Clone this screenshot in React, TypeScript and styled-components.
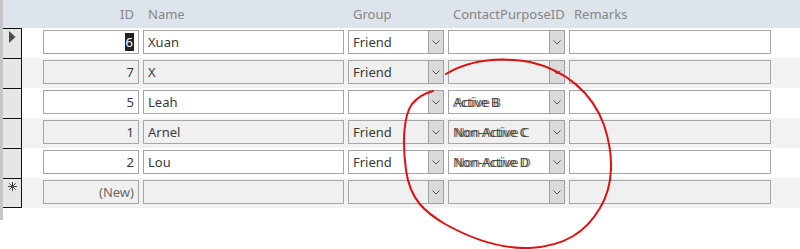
import React from "react";
import styled, { createGlobalStyle } from "styled-components";

const Global = createGlobalStyle`
  html, body { margin: 0; padding: 0; background: #ffffff; }
  body { font-family: "Noto Sans", "Liberation Sans", sans-serif; }
`;

const Page = styled.div`
  position: relative;
  width: 800px;
  height: 249px;
  display: flex;
  align-items: flex-start;
  background: #ffffff;
  overflow: hidden;
`;

const Strip = styled.div`
  width: 3px;
  height: 220px;
  background: #c6c6c6;
  flex: none;
`;

const Sheet = styled.div`
  flex: 1;
  display: flex;
  flex-direction: column;
`;

const HeaderRow = styled.div`
  display: flex;
  height: 28px;
  background: #dee4eb;
`;

const SelectorHead = styled.div`
  width: 19px;
  flex: none;
`;

const Columns = styled.div`
  flex: 1;
  display: grid;
  grid-template-columns: 96px 201px 96px 117px 202px;
  column-gap: 4px;
  padding-left: 21px;
`;

const HeadCell = styled.div<{ $right?: boolean }>`
  font-size: 13px;
  color: #858585;
  line-height: 28px;
  white-space: nowrap;
  overflow: hidden;
  text-align: ${(p) => (p.$right ? "right" : "left")};
  padding: 0 5px;
`;

const Row = styled.div<{ $alt: boolean }>`
  display: flex;
  height: 30px;
  background: ${(p) => (p.$alt ? "#f2f2f2" : "#ffffff")};
`;

const Selector = styled.div<{ $last?: boolean }>`
  width: 19px;
  height: 30px;
  flex: none;
  box-sizing: border-box;
  background: #e6e6e6;
  border-right: 1px solid #111;
  border-top: 1px solid #111;
  border-bottom: ${(p) => (p.$last ? "1px solid #111" : "none")};
  display: flex;
  justify-content: center;
  align-items: flex-start;
  padding-top: ${(p) => (p.$last ? "3px" : "2px")};
  padding-left: 1px;
`;

const RowColumns = styled(Columns)`
  padding-top: 2px;
  align-items: start;
`;

const Box = styled.div<{ $alt: boolean; $right?: boolean }>`
  box-sizing: border-box;
  height: 24px;
  border: 1px solid #a6a6a6;
  background: ${(p) => (p.$alt ? "#f0f0f0" : "#ffffff")};
  font-size: 13px;
  line-height: 22px;
  color: #3a3a3a;
  padding: 0 4px;
  text-align: ${(p) => (p.$right ? "right" : "left")};
  white-space: nowrap;
  overflow: hidden;
`;

const Combo = styled.div<{ $alt: boolean }>`
  box-sizing: border-box;
  height: 24px;
  border: 1px solid #a6a6a6;
  background: ${(p) => (p.$alt ? "#f0f0f0" : "#ffffff")};
  display: flex;
`;

const ComboText = styled.div<{ $ghost?: boolean }>`
  flex: 1;
  font-size: 13px;
  line-height: 22px;
  color: ${(p) => (p.$ghost ? "#4a4a4a" : "#3a3a3a")};
  padding: 0 4px;
  white-space: nowrap;
  overflow: hidden;
  letter-spacing: ${(p) => (p.$ghost ? "-0.3px" : "0")};
  text-shadow: ${(p) => (p.$ghost ? "2px 0 0 rgba(70,70,70,0.75)" : "none")};
`;

const DropBtn = styled.div`
  width: 16px;
  flex: none;
  box-sizing: border-box;
  margin: -1px -1px -1px 0;
  height: 24px;
  border: 1px solid #a0a0a0;
  background: #dadada;
  display: flex;
  align-items: center;
  justify-content: center;
`;

const Sel = styled.span`
  background: #222;
  color: #fff;
  padding: 0 1px;
`;

const NewText = styled.span`
  color: #6a6a6a;
`;

const Overlay = styled.svg`
  position: absolute;
  left: 0;
  top: 0;
  pointer-events: none;
`;

const Chevron = () => (
  <svg width="8" height="5" viewBox="0 0 8 5">
    <path d="M0.5 0.5 L4 4 L7.5 0.5" fill="none" stroke="#555" strokeWidth="1" />
  </svg>
);

const Pointer = () => (
  <svg width="7" height="12" viewBox="0 0 7 12">
    <path d="M0 0 L6.5 6 L0 12 Z" fill="#4a4a4a" />
  </svg>
);

const Star = () => (
  <svg width="9" height="9" viewBox="0 0 9 9">
    <g stroke="#444" strokeWidth="1">
      <line x1="4.5" y1="0" x2="4.5" y2="9" />
      <line x1="0" y1="4.5" x2="9" y2="4.5" />
      <line x1="1.3" y1="1.3" x2="7.7" y2="7.7" />
      <line x1="7.7" y1="1.3" x2="1.3" y2="7.7" />
    </g>
  </svg>
);

type Rec = { id: string; name: string; group: string; cp: string; isNew?: boolean; current?: boolean };

const rows: Rec[] = [
  { id: "6", name: "Xuan", group: "Friend", cp: "", current: true },
  { id: "7", name: "X", group: "Friend", cp: "" },
  { id: "5", name: "Leah", group: "", cp: "Active B" },
  { id: "1", name: "Arnel", group: "Friend", cp: "Non-Active C" },
  { id: "2", name: "Lou", group: "Friend", cp: "Non-Active D" },
  { id: "(New)", name: "", group: "", cp: "", isNew: true },
];

export default function App() {
  return (
    <Page>
      <Global />
      <Strip />
      <Sheet>
        <HeaderRow>
          <SelectorHead />
          <Columns>
            <HeadCell $right>ID</HeadCell>
            <HeadCell>Name</HeadCell>
            <HeadCell>Group</HeadCell>
            <HeadCell>ContactPurposeID</HeadCell>
            <HeadCell>Remarks</HeadCell>
          </Columns>
        </HeaderRow>
        {rows.map((r, i) => {
          const alt = i % 2 === 1;
          return (
            <Row key={i} $alt={alt}>
              <Selector $last={r.isNew}>
                {r.current ? <Pointer /> : r.isNew ? <Star /> : null}
              </Selector>
              <RowColumns>
                <Box $alt={alt} $right>
                  {r.current ? <Sel>{r.id}</Sel> : r.isNew ? <NewText>{r.id}</NewText> : r.id}
                </Box>
                <Box $alt={alt}>{r.name}</Box>
                <Combo $alt={alt}>
                  <ComboText>{r.group}</ComboText>
                  <DropBtn>
                    <Chevron />
                  </DropBtn>
                </Combo>
                <Combo $alt={alt}>
                  <ComboText $ghost>{r.cp}</ComboText>
                  <DropBtn>
                    <Chevron />
                  </DropBtn>
                </Combo>
                <Box $alt={alt} />
              </RowColumns>
            </Row>
          );
        })}
      </Sheet>
      <Overlay width="800" height="249" viewBox="0 0 800 249">
        <path
          d="M446 74 C 470 60, 500 57, 530 62 C 565 70, 592 92, 604 125 C 614 155, 614 185, 600 208 C 586 232, 565 246, 530 248 C 500 249, 470 238, 445 224 C 425 212, 410 200, 406 170 C 402 140, 404 115, 412 104 C 418 97, 425 93, 433 91"
          fill="none"
          stroke="#e01010"
          strokeWidth="2"
          strokeLinecap="round"
        />
      </Overlay>
    </Page>
  );
}
